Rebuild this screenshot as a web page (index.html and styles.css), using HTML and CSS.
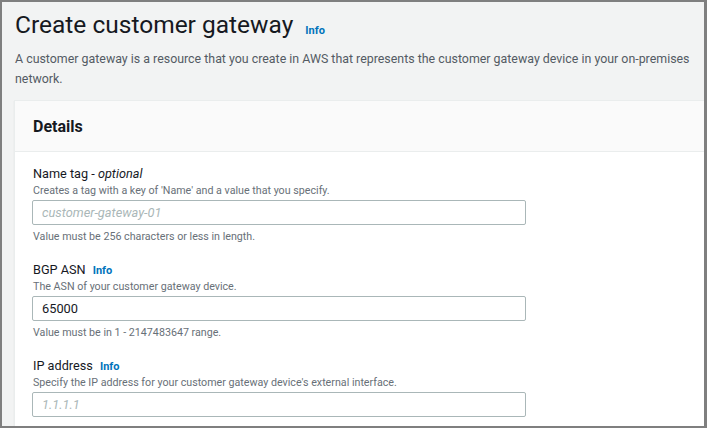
FILE: index.html
```html
<!DOCTYPE html>
<html lang="en">
<head>
    <meta charset="UTF-8">
    <meta name="viewport" content="width=device-width, initial-scale=1.0">
    <title>Create customer gateway</title>
    <link rel="stylesheet" href="styles.css">
</head>
<body>
    <div class="screen">
        <header class="page-head">
            <h1>Create customer gateway <a href="#" class="info">Info</a></h1>
            <p class="page-desc">A customer gateway is a resource that you create in AWS that represents the customer gateway device in your on-premises network.</p>
        </header>

        <section class="card">
            <div class="card-header">
                <h2>Details</h2>
            </div>
            <div class="card-body">
                <div class="field">
                    <label class="field-label" for="name-tag">Name tag - <i>optional</i></label>
                    <p class="field-desc">Creates a tag with a key of 'Name' and a value that you specify.</p>
                    <input class="text-input" id="name-tag" type="text" placeholder="customer-gateway-01">
                    <p class="field-hint">Value must be 256 characters or less in length.</p>
                </div>

                <div class="field">
                    <label class="field-label" for="bgp-asn">BGP ASN <a href="#" class="info">Info</a></label>
                    <p class="field-desc">The ASN of your customer gateway device.</p>
                    <input class="text-input" id="bgp-asn" type="text" value="65000">
                    <p class="field-hint">Value must be in 1 - 2147483647 range.</p>
                </div>

                <div class="field">
                    <label class="field-label" for="ip-address">IP address <a href="#" class="info">Info</a></label>
                    <p class="field-desc">Specify the IP address for your customer gateway device's external interface.</p>
                    <input class="text-input" id="ip-address" type="text" placeholder="1.1.1.1">
                </div>
            </div>
        </section>
    </div>
</body>
</html>
```

FILE: styles.css
```css
html, body {
    margin: 0;
    padding: 0;
}

body {
    font-family: Roboto, 'Noto Sans', sans-serif;
    color: #16191f;
    background: #f2f3f3;
}

.screen {
    box-sizing: border-box;
    height: 428px;
    overflow: hidden;
    border: solid #7f7f7f;
    border-width: 2px 3px 2px 2px;
    background: #f2f3f3;
    padding: 6px 0 0 12px;
}

.page-head {
    padding-left: 1px;
}

h1 {
    margin: 0;
    font-size: 24.5px;
    font-weight: 400;
    line-height: 34px;
}

.info {
    font-size: 11px;
    font-weight: 700;
    line-height: 1;
    color: #0073bb;
    text-decoration: none;
    vertical-align: baseline;
}

h1 .info {
    margin-left: 6px;
    position: relative;
    top: 1px;
}

.page-desc {
    margin: 7px 0 0;
    font-size: 12.4px;
    line-height: 20px;
    color: #545b64;
}

.card {
    margin-top: 11px;
    margin-right: -30px;
    background: #fff;
    border: 1px solid #eaeded;
    box-shadow: 0 1px 1px rgba(0, 29, 50, 0.1);
}

.card-header {
    background: #fafafa;
    border-bottom: 1px solid #eaeded;
    padding: 0 18px;
    height: 50px;
    display: flex;
    align-items: center;
}

h2 {
    margin: 0;
    font-size: 16px;
    font-weight: 700;
}

.card-body {
    padding: 13px 18px;
}

.field {
    margin-bottom: 16px;
}

.field-label {
    display: block;
    font-size: 12.7px;
    line-height: 18px;
}

.field-label .info {
    margin-left: 4px;
}

.field-desc,
.field-hint {
    margin: 0;
    font-size: 10.7px;
    line-height: 15px;
    color: #687078;
}

.field-hint {
    line-height: 16px;
}

.text-input {
    box-sizing: border-box;
    display: block;
    width: 494px;
    height: 25px;
    margin: 2px 0 4px -1px;
    padding: 0 9px;
    border: 1px solid #aab7b8;
    border-radius: 2px;
    font-family: inherit;
    font-size: 12.8px;
    color: #16191f;
    background: #fff;
}

.text-input::placeholder {
    font-style: italic;
    color: #aab7b8;
}
```
